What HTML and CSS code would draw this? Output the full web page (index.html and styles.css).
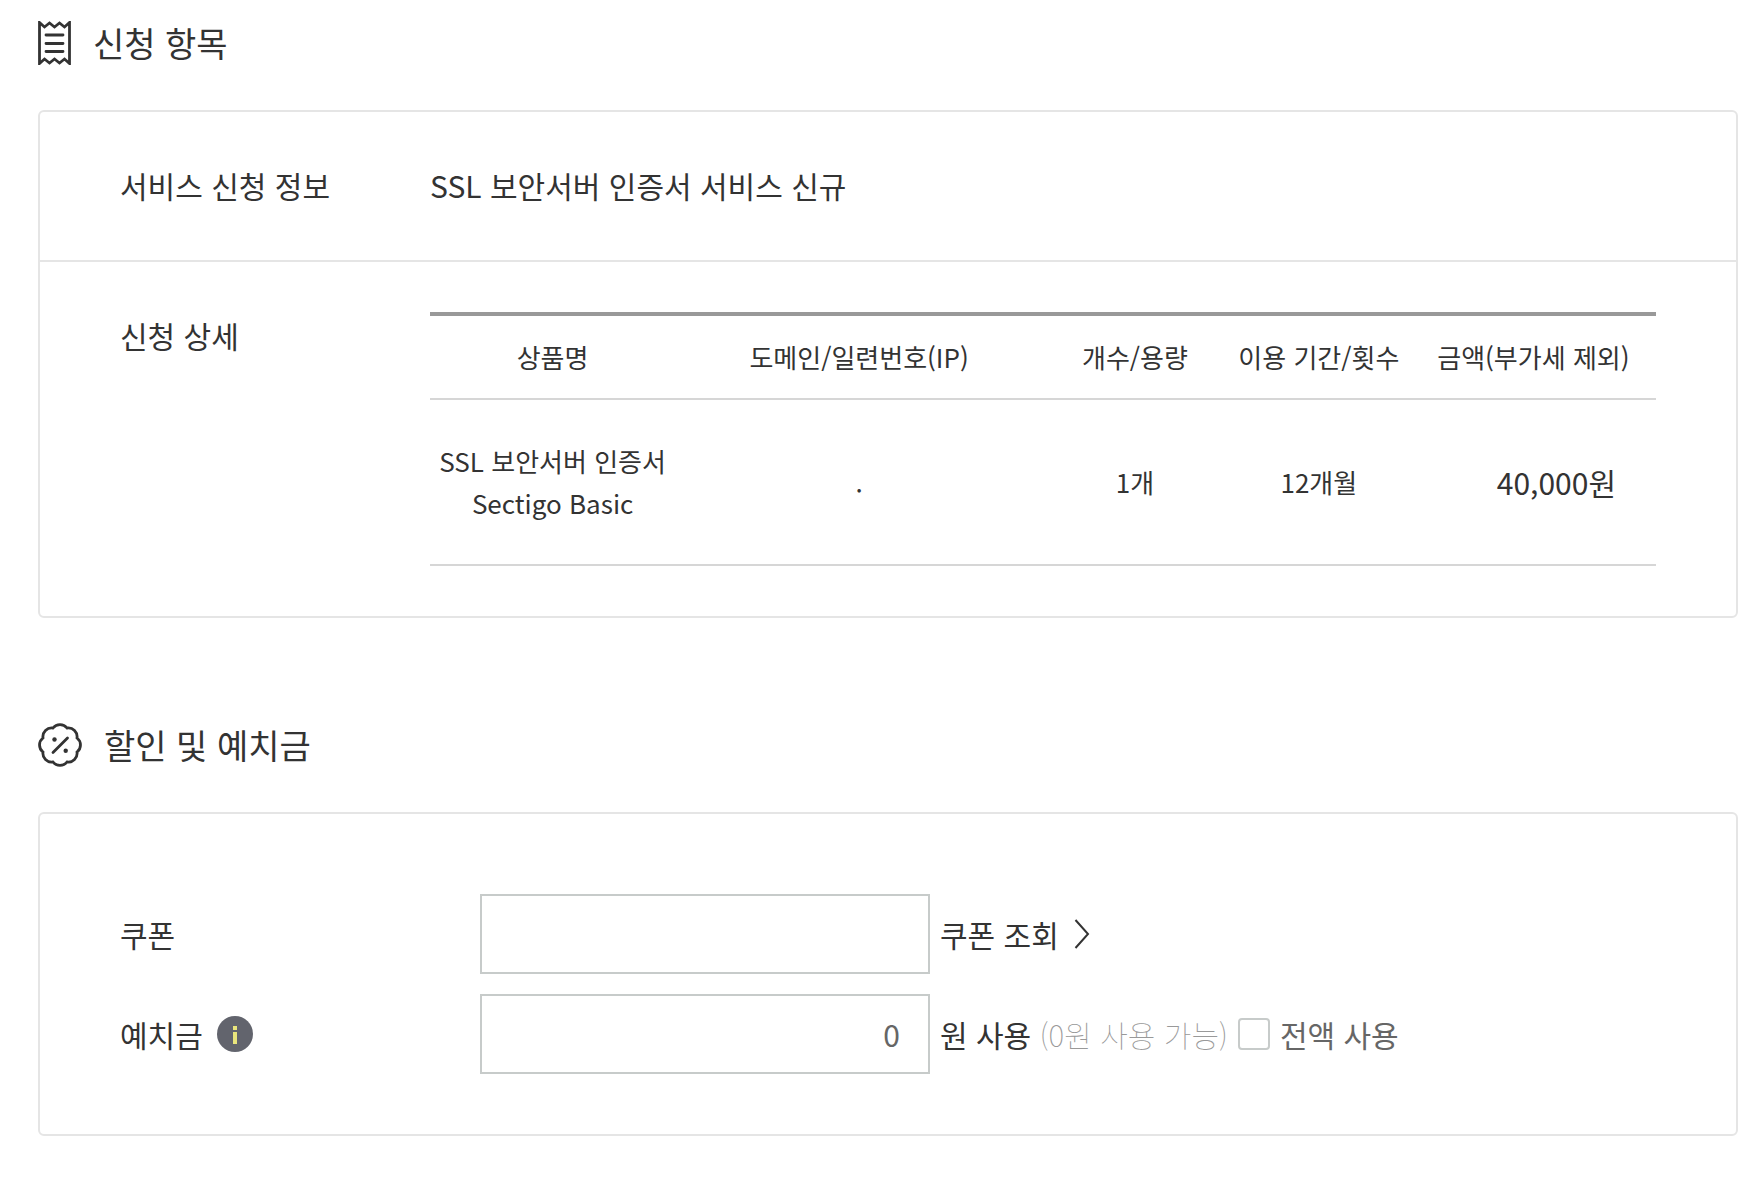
FILE: index.html
```html
<!DOCTYPE html>
<html lang="ko">
<head>
<meta charset="utf-8">
<meta name="viewport" content="width=device-width, initial-scale=1">
<title>신청 항목</title>
<link rel="stylesheet" href="styles.css">
</head>
<body>
<main class="page">
  <section class="section">
    <h2 class="section-title">
      <svg class="title-icon" width="33" height="44" viewBox="0 0 33 44" fill="none" stroke="currentColor" stroke-width="2.8" aria-hidden="true">
        <path d="M1.5 1.5 6.5 6 11.5 2 16.5 6 21.5 2 26.5 6 31.5 1.5V42.5L26.5 38 21.5 42 16.5 38 11.5 42 6.5 38 1.5 42.5Z"/>
        <path d="M8 14H25M8 22.500H25M8 30.500H25" stroke-linecap="round"/>
      </svg>
      신청 항목
    </h2>
    <dl class="panel">
      <div class="info-row">
        <dt>서비스 신청 정보</dt>
        <dd>SSL 보안서버 인증서 서비스 신규</dd>
      </div>
      <div class="info-row">
        <dt>신청 상세</dt>
        <dd>
          <table class="items">
            <colgroup><col class="col-name"><col class="col-domain"><col class="col-count"><col class="col-term"><col class="col-price"></colgroup>
            <thead>
              <tr><th scope="col">상품명</th><th scope="col">도메인/일련번호(IP)</th><th scope="col">개수/용량</th><th scope="col">이용 기간/횟수</th><th scope="col">금액(부가세 제외)</th></tr>
            </thead>
            <tbody>
              <tr><td>SSL 보안서버 인증서<br>Sectigo Basic</td><td>.</td><td>1개</td><td>12개월</td><td class="price">40,000원</td></tr>
            </tbody>
          </table>
        </dd>
      </div>
    </dl>
  </section>

  <section class="section">
    <h2 class="section-title">
      <svg class="title-icon" width="44" height="44" viewBox="0 0 44 44" fill="none" stroke="currentColor" stroke-width="2.8" aria-hidden="true">
        <path d="M15 5A8.800 8.800 0 0 1 29 5A8.800 8.800 0 0 1 39 15A8.800 8.800 0 0 1 39 29A8.800 8.800 0 0 1 29 39A8.800 8.800 0 0 1 15 39A8.800 8.800 0 0 1 5 29A8.800 8.800 0 0 1 5 15A8.800 8.800 0 0 1 15 5Z"/>
        <path d="M15 29.500 29.500 15" stroke-linecap="round"/>
        <g fill="currentColor" stroke="none"><circle cx="16.500" cy="16.500" r="2.200"/><circle cx="27.700" cy="27.700" r="2.200"/></g>
      </svg>
      할인 및 예치금
    </h2>
    <form class="panel discount">
      <div class="field-row">
        <label class="field-label" for="coupon">쿠폰</label>
        <input class="text-box" id="coupon" type="text">
        <a class="lookup" href="#coupon">쿠폰 조회
          <svg width="16" height="30" viewBox="0 0 16 30" fill="none" stroke="currentColor" stroke-width="2" aria-hidden="true"><path d="M1.500 1 14 15 1.500 29"/></svg>
        </a>
      </div>
      <div class="field-row">
        <div class="field-label">
          <label for="deposit">예치금</label>
          <button class="info" type="button" aria-label="예치금 안내">
            <svg width="36" height="36" viewBox="0 0 36 36" aria-hidden="true"><circle cx="18" cy="18" r="18" fill="#62646d"/><path d="M16 10h4v4h-4zM16 16h4v12h-4z" fill="#e9e57c"/></svg>
          </button>
        </div>
        <input class="text-box amount" id="deposit" type="text" inputmode="numeric" value="0">
        <span>원 사용 <span class="available">(0원 사용 가능)</span></span>
        <label class="use-all"><input type="checkbox">전액 사용</label>
      </div>
    </form>
  </section>
</main>
</body>
</html>
```
FILE: styles.css
```css
* {
  box-sizing: border-box;
}

body {
  margin: 0;
  background: #fff;
  color: #333;
  font-family: "Noto Sans CJK KR", "Noto Sans", sans-serif;
  font-size: 30px;
  line-height: 46px;
}

.page {
  padding: 16px 25px 60px 38px;
}

.section + .section {
  margin-top: 100px;
}

.section-title {
  display: flex;
  align-items: center;
  gap: 22px;
  margin: 0 0 40px;
  font-size: 34px;
  font-weight: 400;
  line-height: 54px;
}

.title-icon {
  flex: none;
}

.panel {
  margin: 0;
  border: 2px solid #e5e5e5;
  border-radius: 6px;
}

.info-row {
  display: grid;
  grid-template-columns: 310px minmax(0, 1fr);
  padding: 50px 80px;
}

.info-row:first-child {
  padding-bottom: 52px;
}

.info-row + .info-row {
  border-top: 2px solid #e5e5e5;
}

.info-row dd {
  margin: 0;
}

.items {
  width: 100%;
  table-layout: fixed;
  border-collapse: separate;
  border-spacing: 0;
  border-top: 4px solid #999;
  font-size: 26px;
  line-height: 42px;
  text-align: center;
}

.col-name,
.col-price {
  width: 20%;
}

.col-domain {
  width: 30%;
}

.col-count,
.col-term {
  width: 15%;
}

.items th,
.items td {
  padding: 20px 0;
  border-bottom: 2px solid #d6d6d6;
  font-weight: 400;
  white-space: nowrap;
}

.items td {
  padding: 40px 0;
}

.items .price {
  padding-right: 40px;
  font-size: 30px;
  text-align: right;
}

.discount {
  display: grid;
  gap: 20px;
  padding: 80px 80px 60px;
}

.field-row {
  display: flex;
  align-items: center;
  gap: 10px;
  white-space: nowrap;
}

.field-label {
  display: flex;
  align-items: center;
  gap: 14px;
  width: 350px;
}

.text-box {
  width: 450px;
  height: 80px;
  padding: 0 28px;
  border: 2px solid #c7cbca;
  border-radius: 0;
  background: #fff;
  color: #666;
  font: inherit;
}

.amount {
  text-align: right;
}

.lookup {
  display: flex;
  align-items: center;
  gap: 15px;
  color: inherit;
  text-decoration: none;
}

.info {
  display: flex;
  padding: 0;
  border: 0;
  background: none;
}

.available {
  color: #999;
  font-weight: 100;
}

.use-all {
  display: flex;
  align-items: center;
  gap: 10px;
  color: #666;
}

.use-all input {
  appearance: none;
  width: 32px;
  height: 32px;
  margin: 0;
  border: 2px solid #c7cbca;
  border-radius: 4px;
  background: #fff;
}
```
